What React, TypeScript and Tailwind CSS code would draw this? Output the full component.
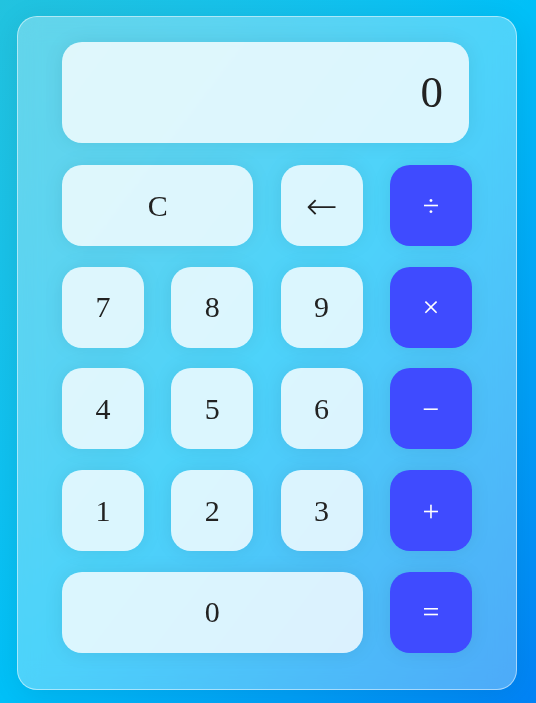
const keys: { label: string; kind: 'num' | 'op'; span?: string }[] = [
  { label: 'C', kind: 'num', span: 'col-span-2' },
  { label: '←', kind: 'num' },
  { label: '÷', kind: 'op' },
  { label: '7', kind: 'num' },
  { label: '8', kind: 'num' },
  { label: '9', kind: 'num' },
  { label: '×', kind: 'op' },
  { label: '4', kind: 'num' },
  { label: '5', kind: 'num' },
  { label: '6', kind: 'num' },
  { label: '−', kind: 'op' },
  { label: '1', kind: 'num' },
  { label: '2', kind: 'num' },
  { label: '3', kind: 'num' },
  { label: '+', kind: 'op' },
  { label: '0', kind: 'num', span: 'col-span-3' },
  { label: '=', kind: 'op' },
];

export default function App() {
  return (
    <div className="min-h-screen w-full bg-gradient-to-br from-[#22c3df] via-[#00c0f8] to-[#0082f5] pt-[16px] font-['Liberation_Serif',serif]">
      <div className="ml-[17px] w-[500px] h-[674px] rounded-[20px] border border-white/50 bg-white/30 backdrop-blur-md shadow-[0_4px_30px_rgba(0,0,0,0.08)] pl-[44px] pt-[25px]">
        {/* Display */}
        <div className="w-[407px] h-[101px] rounded-[20px] bg-white/80 shadow-[0_0_20px_rgba(0,0,0,0.08)] flex items-center justify-end pr-[26px] text-[45px] text-[#222]">
          0
        </div>

        {/* Keys */}
        <div className="mt-[22px] grid grid-cols-[repeat(4,82px)] auto-rows-[81px] gap-x-[27.3px] gap-y-[20.7px]">
          {keys.map((k) => (
            <button
              key={k.label}
              className={`${k.span ?? ''} rounded-[20px] flex items-center justify-center leading-none shadow-[0_0_20px_rgba(0,0,0,0.08)] ${
                k.label === '←' ? "font-['DejaVu_Sans',sans-serif] text-[38px] font-extralight" : 'text-[30px]'
              } ${k.kind === 'op' ? 'bg-[#3f4bff] text-white' : 'bg-white/80 text-[#222]'}`}
            >
              {k.label}
            </button>
          ))}
        </div>
      </div>
    </div>
  );
}
